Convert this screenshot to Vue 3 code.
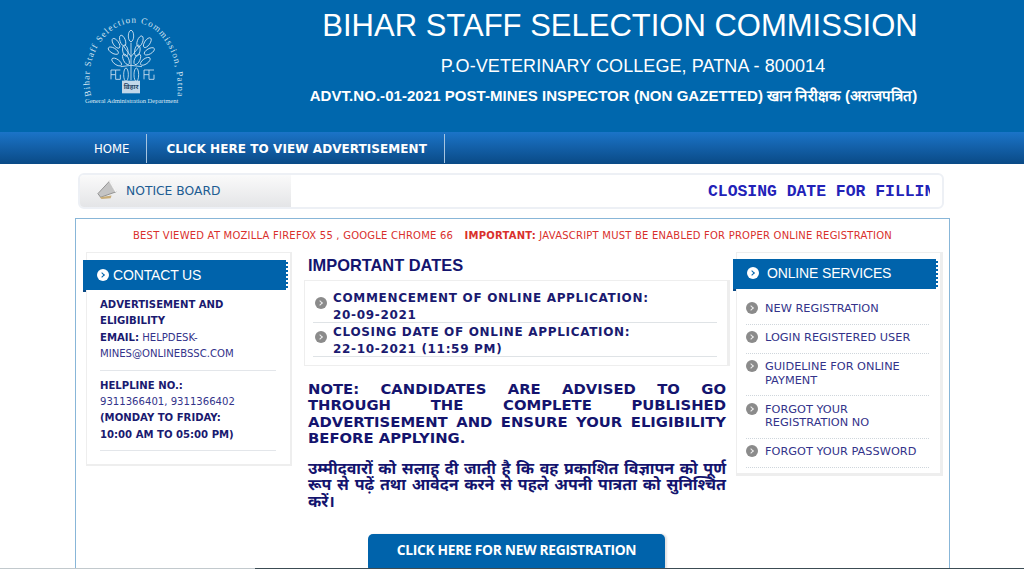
<script setup>
const services = [
  ['NEW REGISTRATION'],
  ['LOGIN REGISTERED USER'],
  ['GUIDELINE FOR ONLINE', 'PAYMENT'],
  ['FORGOT YOUR', 'REGISTRATION NO'],
  ['FORGOT YOUR PASSWORD']
]
const dates = [
  ['COMMENCEMENT OF ONLINE APPLICATION:', '20-09-2021'],
  ['CLOSING DATE OF ONLINE APPLICATION:', '22-10-2021 (11:59 PM)']
]
const leaves = [
  [213, 108, 0], [188, 122, -20], [240, 124, 20], [168, 130, -35], [262, 128, 35],
  [160, 152, -60], [196, 152, -10], [232, 152, 10], [268, 154, 60],
  [170, 186, -55], [198, 178, -25], [232, 178, 25], [256, 184, 55]
]
</script>

<template>
  <div class="page">
    <header class="top">
      <svg class="logo" viewBox="0 0 480 360" aria-label="Bihar Staff Selection Commission logo">
        <defs>
          <path id="arc" d="M94 288 C66 170 140 68 222 68 C300 68 362 160 352 292" />
        </defs>
        <text class="arc-text"><textPath href="#arc" textLength="575">Bihar Staff Selection Commission, Patna</textPath></text>
        <g class="tree">
          <ellipse v-for="(l, i) in leaves" :key="i" :cx="l[0]" :cy="l[1]" rx="8" ry="17" :transform="`rotate(${l[2]} ${l[0]} ${l[1]})`" />
          <path d="M213 128V240M213 196L182 200M213 196L246 200M213 170L192 140M213 170L238 140" />
          <ellipse cx="198" cy="224" rx="7" ry="20" />
          <ellipse cx="229" cy="224" rx="7" ry="20" />
          <path d="M153 238v-28h14v14h-14M167 210h14M167 224v14h14v-14M252 238v-28h15v14h-15M267 210h15M267 224v14h15v-14" />
        </g>
        <rect x="186" y="242" width="54" height="38" fill="#c3d8ea" />
        <text class="mark" x="213" y="268" text-anchor="middle">बिहार</text>
        <text class="dept" x="215" y="310" text-anchor="middle" textLength="280">General Administration Department</text>
      </svg>
      <div class="titles">
        <h1>BIHAR STAFF SELECTION COMMISSION</h1>
        <p class="sub">P.O-VETERINARY COLLEGE, PATNA - 800014</p>
        <p class="advt">ADVT.NO.-01-2021 POST-MINES INSPECTOR (NON GAZETTED) खान निरीक्षक (अराजपत्रित)</p>
      </div>
    </header>

    <nav class="nav">
      <a class="home">HOME</a>
      <a class="adv">CLICK HERE TO VIEW ADVERTISEMENT</a>
    </nav>

    <section class="notice">
      <div class="notice-label">
        <svg class="horn" viewBox="0 0 24 22">
          <path d="M2 15 L15 1 L22 13 L5 19 Z" fill="#c4c4c4" stroke="#8b8b8b" />
          <path d="M15 1 L22 13" stroke="#f4f4f4" stroke-width="2" />
          <path d="M4 19 L17 17 L16 20 L6 21 Z" fill="#c9ad78" />
        </svg>
        <span>NOTICE BOARD</span>
      </div>
      <div class="marquee"><span>CLOSING DATE FOR FILLIN</span></div>
    </section>

    <main class="box">
      <p class="warn">BEST VIEWED AT MOZILLA FIREFOX 55 , GOOGLE CHROME 66 <b>IMPORTANT:</b> JAVASCRIPT MUST BE ENABLED FOR PROPER ONLINE REGISTRATION</p>
      <div class="cols">
        <aside class="side left">
          <h2 class="side-head"><i class="dot white"></i>CONTACT US</h2>
          <div class="contact">
            <div class="block">
              <b>ADVERTISEMENT AND ELIGIBILITY</b><br />
              <b>EMAIL:</b> HELPDESK-<br />MINES@ONLINEBSSC.COM
            </div>
            <div class="block">
              <b>HELPLINE NO.:</b><br />
              9311366401, 9311366402<br />
              <b>(MONDAY TO FRIDAY:<br />10:00 AM TO 05:00 PM)</b>
            </div>
          </div>
        </aside>

        <section class="center">
          <h2 class="dates-head">IMPORTANT DATES</h2>
          <ul class="dates">
            <li v-for="d in dates" :key="d[0]">
              <i class="dot grey"></i>
              <div>{{ d[0] }}<br />{{ d[1] }}</div>
            </li>
          </ul>
          <p class="note">NOTE: CANDIDATES ARE ADVISED TO GO THROUGH THE COMPLETE PUBLISHED ADVERTISEMENT AND ENSURE YOUR ELIGIBILITY BEFORE APPLYING.</p>
          <p class="hindi">उम्मीदवारों को सलाह दी जाती है कि वह प्रकाशित विज्ञापन को पूर्ण रूप से पढ़ें तथा आवेदन करने से पहले अपनी पात्रता को सुनिश्चित करें।</p>
          <a class="cta">CLICK HERE FOR NEW REGISTRATION</a>
        </section>

        <aside class="side right">
          <h2 class="side-head"><i class="dot white"></i>ONLINE SERVICES</h2>
          <ul class="services">
            <li v-for="s in services" :key="s[0]">
              <i class="dot grey"></i>
              <div><template v-for="(t, i) in s" :key="t">{{ t }}<br v-if="i < s.length - 1" /></template></div>
            </li>
          </ul>
        </aside>
      </div>
    </main>
    <div class="strip"></div>
  </div>
</template>

<style>
html, body { margin: 0; background: #fff; overflow: hidden; }
</style>

<style scoped>
.page { position: relative; width: 1024px; height: 569px; overflow: hidden; font-family: "DejaVu Sans", Verdana, sans-serif; color: #1a1a7a; background: #fff; }
.top { height: 132px; background: #0067ad; display: flex; color: #fff; }
.logo { width: 160px; height: 120px; margin-left: 60px; flex: none; }
.arc-text { font: 27px "Liberation Serif", serif; fill: #d6e6f3; }
.tree { fill: none; stroke: #d6e6f3; stroke-width: 2.500; }
.mark { font: bold 20px "Noto Sans", sans-serif; fill: #2a4a6a; }
.dept { font: 20px "Liberation Serif", serif; fill: #d6e6f3; }
.titles { width: 640px; margin-left: 80px; text-align: center; font-family: "Liberation Sans", Arial, sans-serif; }
h1 { margin: 8px 0 0; font-size: 31px; font-weight: 400; line-height: 36px; white-space: nowrap; }
.sub { margin: 12px 0 0; padding-left: 26px; font-size: 18px; letter-spacing: .08px; line-height: 21px; white-space: nowrap; }
.advt { margin: 10px 0 0; padding-right: 13px; font-size: 15px; font-weight: 700; line-height: 17px; white-space: nowrap; letter-spacing: .05px; }
.nav { height: 32px; display: flex; align-items: center; padding-left: 78px; background: linear-gradient(#1b74c8, #0a4a86); color: #fff; }
.nav a { height: 29px; border-right: 1px solid #a6c4e0; white-space: nowrap; }
.home { padding: 0 17px 0 16px; font: 11.700px/30px "DejaVu Sans", sans-serif; }
.adv { padding: 0 17px 0 19px; font: bold 12px/30px "DejaVu Sans", sans-serif; letter-spacing: .07px; }
.notice { width: 866px; height: 36px; box-sizing: border-box; margin: 9px 0 0 78px; display: flex; justify-content: space-between; border: 2px solid #edf0f5; border-radius: 6px; overflow: hidden; }
.notice-label { width: 211px; display: flex; align-items: center; gap: 8px; padding-left: 16px; box-sizing: border-box; background: linear-gradient(#fafafa, #e4e5e7); color: #1d5c92; font: 12.300px "DejaVu Sans", sans-serif; }
.horn { width: 22px; height: 20px; margin-top: -2px; }
.marquee { width: 222px; margin-right: 12px; overflow: hidden; white-space: nowrap; font: bold 16.400px/33px "Liberation Mono", monospace; color: #2222b8; }
.box { width: 875px; height: 360px; box-sizing: border-box; margin: 9px 0 0 75px; border: 1px solid #88b6d8; border-bottom: 0; padding: 0 0 0 10px; }
.warn { margin: 11px 0 0 -10px; text-align: center; font: 10px/12px "DejaVu Sans", sans-serif; letter-spacing: .22px; color: #d9302c; white-space: pre-wrap; }
.warn b { margin-left: 8px; }
.cols { display: grid; grid-template-columns: 206px 438px 213px; margin-top: 10px; }
.side { border: 1px solid #eee; box-sizing: border-box; align-self: start; }
.left { height: 214px; border-width: 1px 2px 2px 1px; }
.right { width: 207px; height: 224px; margin-left: 6px; border-width: 1px 3px 3px 1px; }
.side-head { position: relative; height: 30px; box-sizing: border-box; margin: 7px 2px 0 -4px; padding-left: 14px; display: flex; align-items: center; gap: 4px; background: #0063ab; border-right: 2px dotted #fff; color: #fff; font: 14px "Liberation Sans", sans-serif; letter-spacing: -.15px; }
.side-head::after { content: ""; position: absolute; left: 0; bottom: -2px; width: 3px; height: 2px; background: #0a4a86; }
.right .side-head { gap: 8px; margin-top: 6px; padding-bottom: 2px; }
.dot { width: 12px; height: 12px; border-radius: 50%; flex: none; display: inline-block; position: relative; }
.dot::after { content: ""; position: absolute; left: 3px; top: 4px; width: 3px; height: 3px; border: solid; border-width: 1px 1px 0 0; transform: rotate(45deg); }
.dot.white { background: #fff; color: #0063ab; }
.dot.grey { background: #8b8b8b; color: #eee; }
.contact { padding: 7px 14px 0 13px; font: 10.100px/16.400px "DejaVu Sans", sans-serif; color: #33338a; }
.contact b { color: #1a1a70; }
.block { padding-bottom: 7px; margin-bottom: 7px; border-bottom: 1px solid #e3e6ea; }
.center { padding-left: 12px; min-width: 0; }
.dates-head { margin: 2px 0 0; padding-left: 4px; font: bold 16.400px/22px "Liberation Sans", sans-serif; color: #14146e; }
.dates { list-style: none; margin: 4px 0 0; padding: 8px 10px 0 8px; border: 1px solid #eee; border-right-width: 3px; height: 86px; box-sizing: border-box; }
.dates li { display: flex; gap: 6px; height: 34px; padding: 2px 0 0 2px; border-bottom: 1px solid #dfe3e6; align-items: center; box-sizing: border-box; font: bold 12px/17px "DejaVu Sans", sans-serif; letter-spacing: .68px; color: #1a1a70; }
.dates .dot { align-self: flex-start; margin-top: 6px; }
.note { margin: 15px 4px 0 4px; font: bold 14.800px/16.400px "DejaVu Sans", sans-serif; color: #14146e; text-align: justify; }
.hindi { margin: 13px 4px 0 4px; font: bold 16px/16.500px "Noto Sans", "Noto Sans Devanagari", sans-serif; color: #14146e; text-align: justify; }
.cta { display: block; width: 297px; height: 38px; margin: 25px 0 0 64px; border-radius: 5px; background: #0063ab; box-shadow: 2px 0 2px #e2e2e2; color: #fff; text-align: center; font: bold 13.800px/32px "Open Sans", sans-serif; letter-spacing: -.3px; }
.services { list-style: none; margin: 0; padding: 10px 11px 0 9px; font: 11.300px/13.500px "DejaVu Sans", sans-serif; letter-spacing: .02px; color: #33338a; }
.services li { display: flex; gap: 7px; padding: 3px 0 8px; margin-bottom: 3.500px; border-bottom: 1px dotted #cfd6dc; }
.strip { position: absolute; left: 0; right: 0; bottom: 0; height: 1px; background: linear-gradient(90deg, #c2c9cd 255px, #3c4c54 255px); }
</style>
